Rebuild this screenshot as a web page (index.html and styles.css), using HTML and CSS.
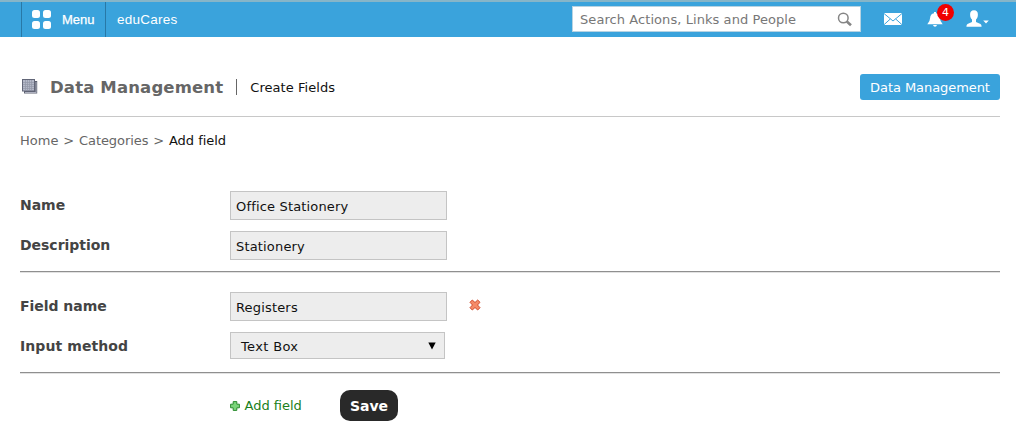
FILE: index.html
```html
<!DOCTYPE html>
<html lang="en">
<head>
<meta charset="utf-8">
<title>eduCares - Create Fields</title>
<link rel="stylesheet" href="styles.css">
</head>
<body>
<header class="topbar">
  <a class="menu">
    <span class="grid"><i></i><i></i><i></i><i></i></span>
    <span class="menu-text">Menu</span>
  </a>
  <span class="brand">eduCares</span>
  <div class="search">
    <span class="search-text">Search Actions, Links and People</span>
    <svg width="16" height="16" viewBox="0 0 16 16"><circle cx="6.3" cy="6" r="4.8" fill="none" stroke="#858585" stroke-width="1.5"/><path d="M9.8 9.5L14 13.3" stroke="#858585" stroke-width="2.6"/></svg>
  </div>
  <svg class="mail" width="18" height="12" viewBox="0 0 18 12"><path fill="#fff" d="M0 0h18v12H0z"/><path d="M0 .5L9 8L18 .5M0 11.7L6.3 6M18 11.7L11.7 6" fill="none" stroke="#3aa3dc" stroke-width="1"/></svg>
  <div class="bell">
    <svg width="16" height="15" viewBox="0 0 16 15"><path fill="#fff" d="M7 0h2v1.3Q12.7 2 12.9 6Q13 9.6 15.7 12.3H.3Q3 9.6 3.1 6Q3.3 2 7 1.3zM6 13h4Q9.5 14.8 8 14.8T6 13z"/></svg>
    <span class="badge">4</span>
  </div>
  <svg class="user" width="24" height="18" viewBox="0 0 24 18"><path fill="#fff" d="M8 .3C10.7.3 12 2 11.9 4.8C11.8 7.3 11 8.6 10 9.5V12L14.5 14Q15.6 14.6 15.6 16.7H.4Q.4 14.6 1.5 14L6 12V9.5C5 8.6 4.2 7.3 4.1 4.8C4 2 5.3.3 8 .3zM17.2 10.5h5.6L20 13.5z"/></svg>
</header>
<main class="page">
  <div class="heading">
    <svg class="stack" width="16" height="15" viewBox="0 0 16 15"><path fill="#5c6070" d="M2 2h13.2v12.5H2z"/><path fill="#c9ccda" d="M3 13h11.5v.7H3zM13.7 3h.7v10h-.7z"/><path fill="#626678" d="M0 0h13v12.5H0z"/><path fill="#b4b8c8" d="M1 1h11v10.5H1z"/><path d="M1 3.5h11M1 5.5h11M1 7.5h11M1 9.5h11M3.5 1v10.5M5.5 1v10.5M7.5 1v10.5M9.5 1v10.5" stroke="#9296a8" stroke-width=".7"/></svg>
    <h1 class="title">Data Management</h1>
    <span class="bar"></span>
    <span class="subtitle">Create Fields</span>
    <a class="button">Data Management</a>
  </div>
  <nav class="crumbs"><span>Home</span><span class="sep">&gt;</span><span class="category">Categories</span><span class="sep">&gt;</span><span class="current">Add field</span></nav>
  <form class="form">
    <div class="row"><span class="label">Name</span><div class="field"><span>Office Stationery</span></div></div>
    <div class="row"><span class="label">Description</span><div class="field"><span>Stationery</span></div></div>
    <div class="rule"></div>
    <div class="row"><span class="label">Field name</span><div class="field"><span>Registers</span></div>
      <svg class="remove" width="12" height="12" viewBox="0 0 12 12"><path d="M3.3 1L6 3.5L8.7 1L11 3.3L8.5 6L11 8.7L8.7 11L6 8.5L3.3 11L1 8.7L3.5 6L1 3.3z" fill="#f58a68" stroke="#cf4a2c" stroke-linejoin="round"/></svg>
    </div>
    <div class="row"><span class="label method">Input method</span><div class="field select"><span>Text Box</span><svg width="8" height="8" viewBox="0 0 8 8"><path d="M.3 .5h7.4L4 7.5z"/></svg></div></div>
    <div class="rule"></div>
    <div class="actions">
      <a class="add"><svg width="10" height="10" viewBox="0 0 10 10"><path d="M3.2.6h3.6v2.6h2.6v3.6H6.8v2.6H3.2V6.8H.6V3.2h2.6z" fill="#7ad47a" stroke="#2b8b30" stroke-linejoin="round"/></svg><span>Add field</span></a>
      <a class="save"><span>Save</span></a>
    </div>
  </form>
</main>
</body>
</html>
```
FILE: styles.css
```css
* { box-sizing: border-box; }
body { margin: 0; background: #fff; color: #111; font: 13px/16px "DejaVu Sans", Verdana, sans-serif; white-space: nowrap; }
svg { display: block; flex: none; }
.topbar { display: flex; height: 37px; background: #3aa3dc; border-top: 2px solid #86b5c8; color: #fff; }
.menu { display: flex; align-items: center; width: 85px; margin-left: 21px; padding-left: 10px; border-left: 1px solid #2878a6; border-right: 1px solid #2878a6; }
.grid { display: grid; grid-template-columns: 8px 8px; gap: 3px; margin-right: 11px; }
.grid i { height: 8px; border-radius: 2.5px; background: #fff; }
.menu-text { font: 13px/16px "Liberation Sans", Arial, sans-serif; -webkit-text-stroke: .25px #fff; }
.brand { margin: 10px 0 0 11px; font: 13.5px/16px "Liberation Sans", Arial, sans-serif; letter-spacing: .25px; }
.search { display: flex; justify-content: space-between; width: 289px; height: 26px; margin: 4px 0 0 auto; padding: 5px 7px 0 7px; background: #fff; border: 1px solid #b7d3e2; color: #777; }
.search-text { letter-spacing: .07px; }
.mail { margin: 11px 0 0 23px; }
.bell { position: relative; margin: 10px 0 0 25px; }
.badge { position: absolute; left: 10px; top: -8px; width: 17px; height: 17px; border-radius: 50%; background: #f00000; font-size: 11px; line-height: 17px; text-align: center; }
.user { margin: 8px 26px 0 23px; }
.page { padding: 28px 16px 0 20px; }
.heading { display: flex; align-items: center; height: 52px; padding: 0 0 8px 2px; border-bottom: 1px solid #c8c8c8; }
.title { margin: 2px 0 0 12px; font-size: 16.5px; line-height: 20px; letter-spacing: .15px; color: #666; }
.bar { width: 1px; height: 16px; margin: 0 13px 0 13px; background: #666; }
.subtitle { margin-top: 2px; letter-spacing: .05px; }
.button { width: 140px; height: 26px; margin-left: auto; border-radius: 3px; background: #3aa3dc; color: #fff; line-height: 27px; text-align: center; letter-spacing: -.07px; }
.crumbs { display: flex; margin-top: 16px; color: #666; }
.category { letter-spacing: -.07px; }
.sep { width: 20.6px; text-align: center; }
.current { color: #111; letter-spacing: -.03px; }
.form { margin-top: 42px; }
.row { display: flex; margin-bottom: 11px; }
.label { width: 210px; padding-top: 6px; font-size: 14px; font-weight: bold; letter-spacing: -.03px; color: #444; }
.method { letter-spacing: .08px; }
.field { width: 217px; height: 29px; padding: 7px 0 0 5px; border: 1px solid #c4c4c4; background: #ededed; letter-spacing: .17px; }
.select { display: flex; justify-content: space-between; width: 215px; height: 27px; margin-bottom: 2px; padding: 6px 8px 0 10px; letter-spacing: .35px; }
.select svg { margin-top: 3px; }
.remove { margin: 7px 0 0 22px; }
.rule { height: 2px; margin-bottom: 19px; border-top: 1px solid #8f8f8f; border-bottom: 1px solid #e2e2e2; }
.actions { display: flex; margin: -3px 0 0 210px; }
.add { display: flex; align-items: center; gap: 4.5px; width: 110px; height: 31px; color: #1a801a; }
.save { width: 58px; height: 31px; border-radius: 10px; background: #292929; color: #fff; font-size: 14px; font-weight: bold; line-height: 32px; text-align: center; }
```
